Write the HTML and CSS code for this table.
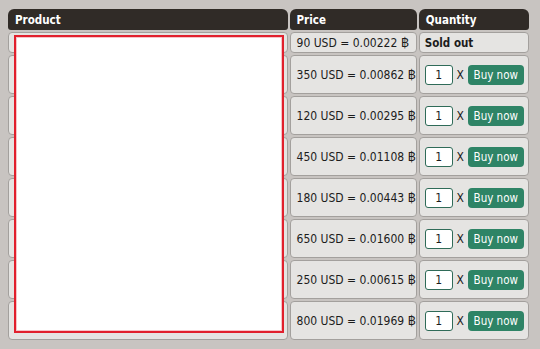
FILE: index.html
```html
<!DOCTYPE html>
<html lang="en">

<head>
    <meta charset="utf-8">
    <title>Shop</title>
    <link rel="stylesheet" href="styles.css">
</head>

<body>
<div class="shop-wrapper">
    <table class="shop">
        <thead>
        <tr>
            <th class="col-product">Product</th>
            <th class="col-price">Price</th>
            <th class="col-qty">Quantity</th>
        </tr>
        </thead>
        <tbody>
        <tr class="row-sold">
            <td class="product"></td>
            <td class="price">90 USD = 0.00222 <span class="baht">฿</span></td>
            <td class="qty sold">Sold out</td>
        </tr>
        <tr class="row-buy">
            <td class="product"></td>
            <td class="price">350 USD = 0.00862 <span class="baht">฿</span></td>
            <td class="qty"><input class="amount" type="text" value="1"><span class="times">X</span><button class="buy">Buy now</button></td>
        </tr>
        <tr class="row-buy">
            <td class="product"></td>
            <td class="price">120 USD = 0.00295 <span class="baht">฿</span></td>
            <td class="qty"><input class="amount" type="text" value="1"><span class="times">X</span><button class="buy">Buy now</button></td>
        </tr>
        <tr class="row-buy">
            <td class="product"></td>
            <td class="price">450 USD = 0.01108 <span class="baht">฿</span></td>
            <td class="qty"><input class="amount" type="text" value="1"><span class="times">X</span><button class="buy">Buy now</button></td>
        </tr>
        <tr class="row-buy">
            <td class="product"></td>
            <td class="price">180 USD = 0.00443 <span class="baht">฿</span></td>
            <td class="qty"><input class="amount" type="text" value="1"><span class="times">X</span><button class="buy">Buy now</button></td>
        </tr>
        <tr class="row-buy">
            <td class="product"></td>
            <td class="price">650 USD = 0.01600 <span class="baht">฿</span></td>
            <td class="qty"><input class="amount" type="text" value="1"><span class="times">X</span><button class="buy">Buy now</button></td>
        </tr>
        <tr class="row-buy">
            <td class="product"></td>
            <td class="price">250 USD = 0.00615 <span class="baht">฿</span></td>
            <td class="qty"><input class="amount" type="text" value="1"><span class="times">X</span><button class="buy">Buy now</button></td>
        </tr>
        <tr class="row-buy">
            <td class="product"></td>
            <td class="price">800 USD = 0.01969 <span class="baht">฿</span></td>
            <td class="qty"><input class="amount" type="text" value="1"><span class="times">X</span><button class="buy">Buy now</button></td>
        </tr>
        </tbody>
    </table>
    <!-- product preview sits over the product column -->
    <div class="preview"></div>
</div>
</body>

</html>
```

FILE: styles.css
```css
html,
body {
    margin: 0;
    height: 100%;
    background: #c8c4c1;
}

body {
    font-family: "DejaVu Sans Condensed", "DejaVu Sans", Verdana, sans-serif;
    font-size: 12px;
    color: #1c1c1c;
}

.shop-wrapper {
    position: relative;
    padding: 7px 6px;
}

.shop {
    width: 525px;
    border-collapse: separate;
    border-spacing: 2px;
    table-layout: fixed;
}

.shop .col-product {
    width: 279px;
}

.shop .col-price {
    width: 127px;
}

.shop .col-qty {
    width: 110px;
}

.shop th {
    box-sizing: border-box;
    height: 21px;
    padding: 0 7px;
    text-align: left;
    font-size: 11.5px;
    font-weight: 700;
    color: #ffffff;
    background: #302b27;
    border-radius: 6px 6px 3px 3px;
}

.shop td {
    box-sizing: border-box;
    padding: 0 6px;
    background: #e5e4e2;
    border: 1px solid #a3a09d;
    border-radius: 4px;
    white-space: nowrap;
}

.shop .row-sold td {
    height: 21px;
}

.shop .row-buy td {
    height: 39px;
}

/* baht sign is missing from the condensed face */
.shop .baht {
    font-family: Lato, "DejaVu Sans", sans-serif;
    font-size: 12.5px;
    color: #1c1c1c;
}

.shop td.qty {
    padding: 0 5px;
}

.shop td.sold {
    font-size: 11.5px;
    font-weight: 700;
}

.shop .amount {
    box-sizing: border-box;
    width: 28px;
    height: 20px;
    margin: 0;
    padding: 0;
    vertical-align: middle;
    text-align: center;
    font-family: inherit;
    font-size: 12px;
    color: #1c1c1c;
    background: #ffffff;
    border: 1px solid #2f6b58;
    border-radius: 3px;
    outline: none;
}

.shop .times {
    display: inline-block;
    width: 15px;
    text-align: center;
    vertical-align: middle;
}

.shop .buy {
    box-sizing: border-box;
    width: 56px;
    height: 20px;
    margin: 0;
    padding: 0;
    vertical-align: middle;
    font-family: inherit;
    font-size: 11.5px;
    color: #ffffff;
    background: #2e8466;
    border: none;
    border-radius: 4px;
    cursor: pointer;
}

.preview {
    position: absolute;
    left: 14px;
    top: 35px;
    width: 270px;
    height: 298px;
    box-sizing: border-box;
    background: #ffffff;
    border: 2px solid #e1202d;
    box-shadow: inset 0 0 0 1px #f6c4c8;
}
```
